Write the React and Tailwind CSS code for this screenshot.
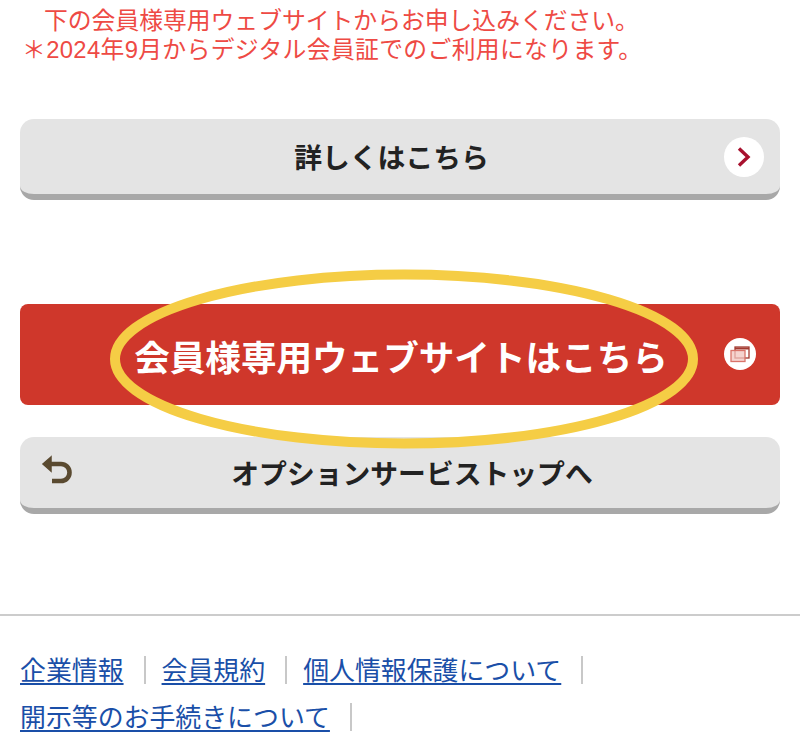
import React from 'react';

const links = ['企業情報', '会員規約', '個人情報保護について', '開示等のお手続きについて'];

function GrayButton({ height, label, labelClass, left, right }) {
  return (
    <a className={`relative flex items-center justify-center rounded-[14px] bg-[#e4e4e4] border-b-[6px] border-[#a8a8a8] text-[27.8px] font-bold text-[#222222] ${height}`}>
      {left}
      <span className={labelClass}>{label}</span>
      {right}
    </a>
  );
}

function App() {
  return (
    <div className="relative w-[800px] h-[739px] overflow-hidden bg-white font-['Liberation_Sans','Noto_Sans_CJK_JP',sans-serif]">
      <div className="pt-[6px] px-[22px] text-[23.8px] leading-[29px] text-[#ee4a44] whitespace-nowrap">
        <p className="pl-[22px]">下の会員様専用ウェブサイトからお申し込みください。</p>
        <p className="tracking-[0.35px]">＊2024年9月からデジタル会員証でのご利用になります。</p>
      </div>

      <div className="mx-5 mt-[55px]">
        <GrayButton
          height="h-[81px]"
          label="詳しくはこちら"
          labelClass="mr-[17px] mt-[5px]"
          right={
            <span className="absolute right-[16px] top-[18px] flex h-10 w-10 items-center justify-center rounded-full bg-white">
              <svg width="18" height="22" viewBox="0 0 18 22" fill="none" stroke="#a8112e" strokeWidth="3.4">
                <path d="M4 2.5l9 8.5-9 8.5" />
              </svg>
            </span>
          }
        />

        <a className="relative mt-[104px] flex h-[101px] items-center justify-center rounded-lg bg-[#cf372b] text-[35.6px] font-bold text-white">
          <span className="ml-[2px] mt-[10px]">会員様専用ウェブサイトはこちら</span>
          <span className="absolute right-[24px] top-[34px] flex h-8 w-8 items-center justify-center rounded-full bg-white">
            <svg width="22" height="20" viewBox="0 0 22 20" fill="none">
              <rect x="6" y="3" width="14" height="11" fill="#fff" stroke="#a33a30" strokeWidth="1.3" />
              <path d="M6 4.5h14" stroke="#a33a30" strokeWidth="2" />
              <rect x="2" y="6.5" width="14" height="11" fill="#f2c4bf" fillOpacity="0.75" stroke="#d9736a" strokeWidth="1.3" />
            </svg>
          </span>
        </a>

        <div className="mt-8">
          <GrayButton
            height="h-[77px]"
            label="オプションサービストップへ"
            labelClass="ml-[24px] mt-[4px]"
            left={
              <svg className="absolute left-[20px] top-[17px]" width="34" height="32" viewBox="0 0 34 32" fill="none" stroke="#5a4a30" strokeWidth="4.6">
                <path d="M11 3L3 10l8 7z" fill="#5a4a30" strokeWidth="1.5" />
                <path d="M8 10h13a7.5 7.5 0 0 1 0 17h-9" />
              </svg>
            }
          />
        </div>
      </div>

      <div className="mt-[100px] border-t-2 border-[#cccccc] pt-[40px] pl-5">
        <ul className="flex flex-wrap gap-y-[19px] text-[25.9px] leading-[28px] text-[#1a4fa8]">
          {links.map((link, i) => (
            <li key={link} className={`border-r-2 border-[#c8c8c8] pr-5 ${i === 2 ? 'mr-[200px]' : 'mr-[16px]'}`}>
              <a className="relative top-[1px] underline underline-offset-[3px] decoration-2">{link}</a>
            </li>
          ))}
        </ul>
      </div>

      {/* highlight drawn over the red button */}
      <svg className="absolute left-[105px] top-[264px]" width="600" height="190" viewBox="0 0 600 190" fill="none">
        <ellipse cx="299" cy="95" rx="289" ry="84.5" stroke="#f5cd45" strokeWidth="10" />
      </svg>
    </div>
  );
}

export default App;
